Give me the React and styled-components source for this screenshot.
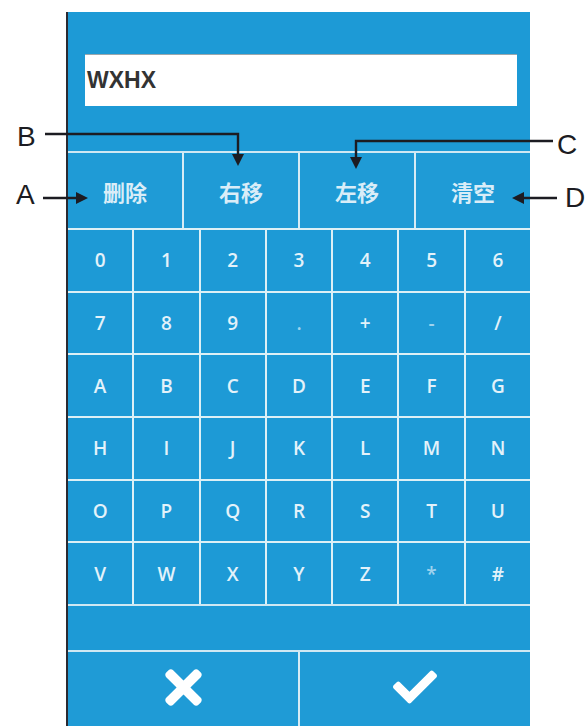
import React from "react";
import styled, { createGlobalStyle } from "styled-components";
import { FaTimes, FaCheck } from "react-icons/fa";

const GlobalStyle = createGlobalStyle`
	html, body {
		margin: 0;
		padding: 0;
		background: #ffffff;
	}
`;

const keys = [
	["0", "1", "2", "3", "4", "5", "6"],
	["7", "8", "9", ".", "+", "-", "/"],
	["A", "B", "C", "D", "E", "F", "G"],
	["H", "I", "J", "K", "L", "M", "N"],
	["O", "P", "Q", "R", "S", "T", "U"],
	["V", "W", "X", "Y", "Z", "*", "#"],
];

const actions = ["删除", "右移", "左移", "清空"];

const callouts = [
	{ label: "A", top: 181, left: 16 },
	{ label: "B", top: 123, left: 17 },
	{ label: "C", top: 131, left: 557 },
	{ label: "D", top: 184, left: 565 },
];

const App = () => {
	return (
		<Page>
			<GlobalStyle />
			<Panel>
				<InputArea>
					<TextBox>WXHX</TextBox>
				</InputArea>
				<ActionRow>
					{actions.map((a) => (
						<ActionKey key={a}>{a}</ActionKey>
					))}
				</ActionRow>
				<KeyGrid>
					{keys.flat().map((k) => (
						<Key key={k} $dim={k === "." || k === "-" || k === "*"}>
							{k}
						</Key>
					))}
				</KeyGrid>
				<Spacer />
				<BottomBar>
					<BottomButton>
						<FaTimes size={53} />
					</BottomButton>
					<BottomButton>
						<FaCheck size={44} />
					</BottomButton>
				</BottomBar>
			</Panel>

			<Leaders width="588" height="726" viewBox="0 0 588 726">
				<g fill="none" stroke="#1c1c22" strokeWidth="2.4">
					<path d="M45 134 H238 V156" />
					<path d="M553 141 H356 V159" />
					<path d="M43 198 H78" />
					<path d="M557 198 H522" />
				</g>
				<g fill="#1c1c22">
					<polygon points="232,154 244,154 238,166" />
					<polygon points="350,157 362,157 356,169" />
					<polygon points="76,192 76,204 88,198" />
					<polygon points="524,192 524,204 512,198" />
				</g>
			</Leaders>
			{callouts.map((c) => (
				<Callout key={c.label} $top={c.top} $left={c.left}>
					{c.label}
				</Callout>
			))}
		</Page>
	);
};

export default App;

const Page = styled.div`
	position: relative;
	width: 588px;
	height: 726px;
	overflow: hidden;
	background: #ffffff;
`;
const Panel = styled.div`
	margin: 12px 0 0 66px;
	width: 462px;
	height: 714px;
	border-left: 2px solid #2a2a32;
	background: #1d9ad6;
	display: flex;
	flex-direction: column;
`;
const InputArea = styled.div`
	padding: 42px 13px 45px 17px;
`;
const TextBox = styled.div`
	height: 52px;
	box-sizing: border-box;
	background: #ffffff;
	border-top: 1px solid #9aa7ad;
	display: flex;
	align-items: center;
	padding-left: 2px;
	font-family: "Liberation Sans", Arial, sans-serif;
	font-weight: bold;
	font-size: 23px;
	color: #333333;
`;
const ActionRow = styled.div`
	height: 77px;
	box-sizing: border-box;
	border-top: 2px solid #cfe8f3;
	display: grid;
	grid-template-columns: repeat(4, 1fr);
	gap: 2px;
	background: #d6ecf5;
`;
const ActionKey = styled.div`
	background: #1f9bd6;
	display: flex;
	align-items: center;
	justify-content: center;
	font-family: "Noto Sans CJK SC", sans-serif;
	font-weight: bold;
	font-size: 22px;
	color: #d9edf8;
`;
const KeyGrid = styled.div`
	height: 376px;
	box-sizing: border-box;
	padding-top: 2px;
	display: grid;
	grid-template-columns: repeat(7, 1fr);
	grid-template-rows: repeat(6, 1fr);
	gap: 2px;
	background: #dcf0f6;
`;
const Key = styled.div`
	background: #1d9ad6;
	display: flex;
	align-items: center;
	justify-content: center;
	font-family: "Open Sans", "Noto Sans", sans-serif;
	font-weight: 600;
	font-size: 19px;
	color: ${(p) => (p.$dim ? "#9fd3ee" : "#e3f2fa")};
`;
const Spacer = styled.div`
	height: 46px;
	border-top: 2px solid #cfe8f3;
	box-sizing: border-box;
`;
const BottomBar = styled.div`
	flex: 1;
	border-top: 2px solid #cfe8f3;
	display: grid;
	grid-template-columns: 1fr 1fr;
	gap: 2px;
	background: #d6ecf5;
`;
const BottomButton = styled.div`
	background: #1f9bd6;
	display: flex;
	align-items: center;
	justify-content: center;
	color: #ffffff;
	padding-bottom: 4px;
`;
const Leaders = styled.svg`
	position: absolute;
	left: 0;
	top: 0;
	pointer-events: none;
`;
const Callout = styled.span`
	position: absolute;
	top: ${(p) => p.$top}px;
	left: ${(p) => p.$left}px;
	font-family: "Liberation Sans", Arial, sans-serif;
	font-size: 28px;
	line-height: 1;
	color: #1c1c22;
`;
